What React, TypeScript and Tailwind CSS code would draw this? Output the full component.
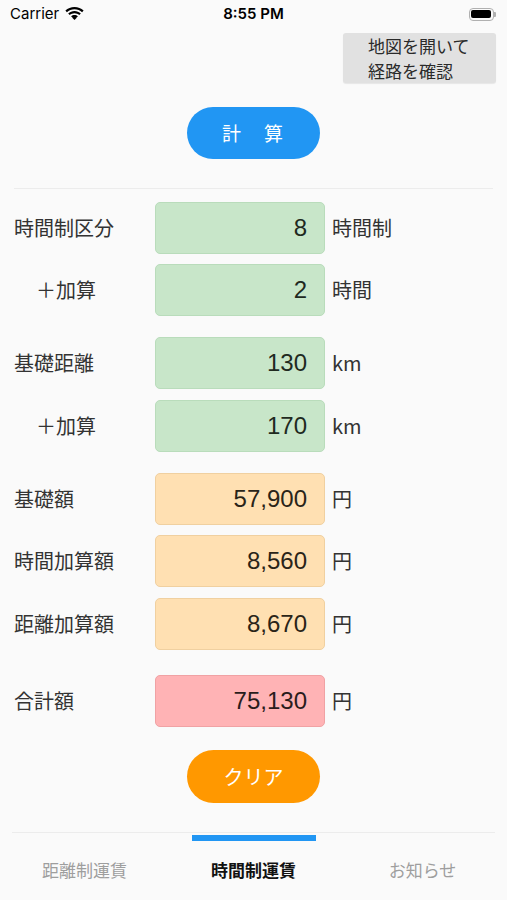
import React from 'react';

type Row = {
  label: string;
  value: string;
  unit: string;
  tone: 'green' | 'orange' | 'red';
  indent?: boolean;
  gapTop?: string;
};

const rows: Row[] = [
  { label: '時間制区分', value: '8', unit: '時間制', tone: 'green' },
  { label: '＋加算', value: '2', unit: '時間', tone: 'green', indent: true, gapTop: 'mt-[10px]' },
  { label: '基礎距離', value: '130', unit: 'km', tone: 'green', gapTop: 'mt-[21px]' },
  { label: '＋加算', value: '170', unit: 'km', tone: 'green', indent: true, gapTop: 'mt-[11px]' },
  { label: '基礎額', value: '57,900', unit: '円', tone: 'orange', gapTop: 'mt-[21px]' },
  { label: '時間加算額', value: '8,560', unit: '円', tone: 'orange', gapTop: 'mt-[10px]' },
  { label: '距離加算額', value: '8,670', unit: '円', tone: 'orange', gapTop: 'mt-[11px]' },
  { label: '合計額', value: '75,130', unit: '円', tone: 'red', gapTop: 'mt-[25px]' },
];

const toneClass = {
  green: 'bg-[#c8e6c9] border-[#b9dcbb] text-[#1f2a1f]',
  orange: 'bg-[#ffe0b2] border-[#f0d0a0] text-[#2a2418]',
  red: 'bg-[#ffb3b5] border-[#f0a2a4] text-[#2a1c1c]',
};

const jp = "font-['Noto_Sans_CJK_JP','Noto_Sans',sans-serif]";

const StatusBar = () => (
  <div className="h-[28px] flex items-center justify-between px-[10px] text-[15px] text-black font-['Inter','Liberation_Sans',sans-serif]">
    <div className="flex items-center gap-[6px] w-[120px]">
      <span>Carrier</span>
      <svg width="19" height="14" viewBox="0 0 19 14">
        <path d="M9.5 2.2c2.9 0 5.6 1.1 7.6 3l1.5-1.6C16.2 1.3 13 0 9.5 0S2.8 1.3.4 3.6L1.9 5.2c2-1.9 4.7-3 7.6-3z" fill="#000" />
        <path d="M9.5 6.2c1.8 0 3.5.7 4.8 1.9l1.5-1.6C14.1 4.9 11.9 4 9.5 4S4.9 4.9 3.2 6.5l1.5 1.6c1.3-1.2 3-1.9 4.8-1.9z" fill="#000" />
        <path d="M9.5 10.1c.8 0 1.5.3 2 .8L9.5 13l-2-2.1c.5-.5 1.2-.8 2-.8zM9.5 8c1.3 0 2.5.5 3.4 1.3l-1.4 1.5c-.5-.5-1.2-.8-2-.8s-1.5.3-2 .8L6.1 9.3C7 8.5 8.2 8 9.5 8z" fill="#000" />
      </svg>
    </div>
    <span className="font-semibold">8:55 PM</span>
    <div className="w-[120px] flex justify-end pr-[1px]">
      <div className="flex items-center">
        <div className="w-[25px] h-[13px] rounded-[4px] border border-[#b0b0b0] p-[1.5px]">
          <div className="w-full h-full rounded-[2px] bg-black" />
        </div>
        <div className="w-[2px] h-[5px] rounded-r-[1px] bg-[#b0b0b0]" />
      </div>
    </div>
  </div>
);

export default function App() {
  return (
    <div className={`w-[507px] h-[900px] bg-[#fafafa] flex flex-col overflow-hidden ${jp}`}>
      <StatusBar />

      <div className="flex justify-end pr-[11px] mt-[5px]">
        <button className="w-[153px] h-[50px] bg-[#e1e1e1] rounded-[3px] text-[17px] leading-[25px] text-[#2a2a2a] text-left pl-[25px] shadow-[0_1px_1px_rgba(0,0,0,0.08)]">
          地図を開いて
          <br />
          経路を確認
        </button>
      </div>

      <div className="flex justify-center mt-[24px]">
        <button className="w-[133px] h-[52px] rounded-full bg-[#2196f3] text-white text-[19px] tracking-[2px]">
          計　算
        </button>
      </div>

      <div className="mx-[14px] mt-[29px] h-px bg-[#ececec]" />

      <div className="mt-[13px] flex flex-col">
        {rows.map((r, i) => (
          <div key={i} className={`flex items-center ${r.gapTop ?? ''}`}>
            <div className={`w-[155px] text-[20px] text-[#333] ${r.indent ? 'pl-[36px]' : 'pl-[14px]'}`}>
              {r.label}
            </div>
            <div
              className={`w-[170px] h-[52px] rounded-[5px] border flex items-center justify-end pr-[17px] text-[24px] font-['Liberation_Sans',sans-serif] ${toneClass[r.tone]}`}
            >
              {r.value}
            </div>
            <div className="ml-[7px] text-[20px] text-[#333]">{r.unit}</div>
          </div>
        ))}
      </div>

      <div className="flex justify-center mt-[23px]">
        <button className="w-[133px] h-[53px] rounded-full bg-[#ff9800] text-white text-[20px]">
          クリア
        </button>
      </div>

      <div className="mx-[12px] mt-[29px] h-px bg-[#ececec]" />

      <div className="grid grid-cols-3 flex-1">
        <div className="flex flex-col items-center">
          <div className="h-[8px]" />
          <div className="mt-[16px] text-[17px] text-[#9e9e9e]">距離制運賃</div>
        </div>
        <div className="flex flex-col items-center">
          <div className="mt-[2px] w-[124px] h-[6px] bg-[#2196f3]" />
          <div className="mt-[16px] text-[17px] font-bold text-[#111]">時間制運賃</div>
        </div>
        <div className="flex flex-col items-center">
          <div className="h-[8px]" />
          <div className="mt-[16px] text-[17px] text-[#9e9e9e]">お知らせ</div>
        </div>
      </div>
    </div>
  );
}
